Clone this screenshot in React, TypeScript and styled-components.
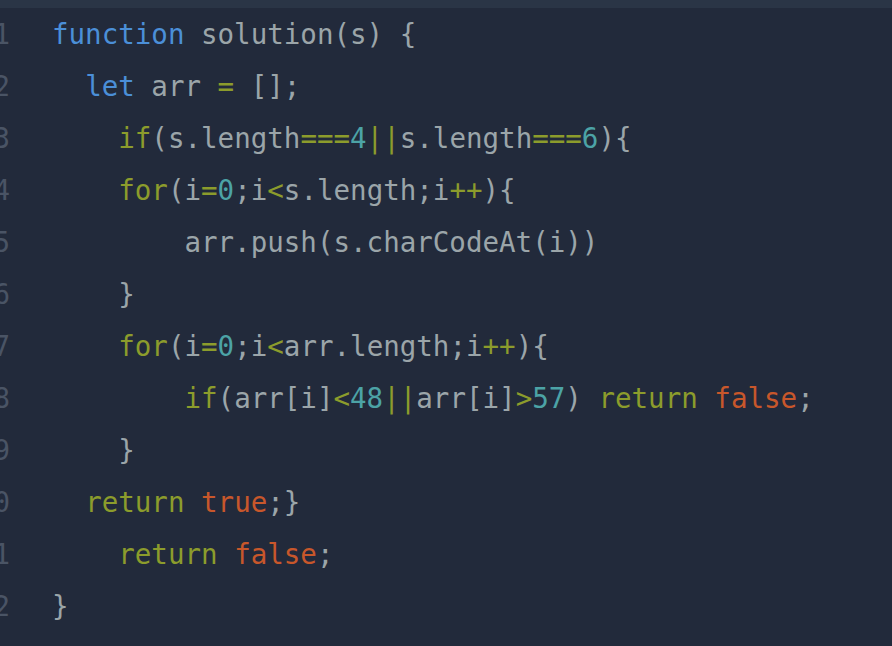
import React from "react";
import styled, { createGlobalStyle } from "styled-components";

const Global = createGlobalStyle`
  html, body { margin: 0; padding: 0; background: #222a3b; overflow: hidden; }
`;

const Frame = styled.div`
  width: 892px;
  height: 646px;
  background: #222a3b;
  display: flex;
  flex-direction: column;
  overflow: hidden;
`;

const TopBar = styled.div`
  height: 8px;
  flex: none;
  background: #2a3546;
`;

const Editor = styled.div`
  display: flex;
  margin-left: -32px;
  font-family: "DejaVu Sans Mono", Menlo, monospace;
  font-size: 27.5px;
  line-height: 52px;
`;

const Gutter = styled.div`
  width: 42px;
  flex: none;
  text-align: right;
  color: #4a5465;
`;

const Code = styled.div`
  padding-left: 42px;
  white-space: pre;
  color: #9ba5a9;
`;

const Line = styled.div`
  height: 52px;
`;

type Kind = "kw" | "ctl" | "num" | "bool" | "txt";
const colors: Record<Kind, string> = {
  kw: "#4b8fd8",
  ctl: "#8c9c2c",
  num: "#4ca3a6",
  bool: "#c8572b",
  txt: "#9ba5a9",
};

const Tok = styled.span<{ $k: Kind }>`
  color: ${(p) => colors[p.$k]};
`;

type T = [Kind, string];
const lines: T[][] = [
  [["kw", "function"], ["txt", " solution(s) {"]],
  [["txt", "  "], ["kw", "let"], ["txt", " arr "], ["ctl", "="], ["txt", " [];"]],
  [["txt", "    "], ["ctl", "if"], ["txt", "(s.length"], ["ctl", "==="], ["num", "4"], ["ctl", "||"], ["txt", "s.length"], ["ctl", "==="], ["num", "6"], ["txt", "){"]],
  [["txt", "    "], ["ctl", "for"], ["txt", "(i"], ["ctl", "="], ["num", "0"], ["txt", ";i"], ["ctl", "<"], ["txt", "s.length;i"], ["ctl", "++"], ["txt", "){"]],
  [["txt", "        arr.push(s.charCodeAt(i))"]],
  [["txt", "    }"]],
  [["txt", "    "], ["ctl", "for"], ["txt", "(i"], ["ctl", "="], ["num", "0"], ["txt", ";i"], ["ctl", "<"], ["txt", "arr.length;i"], ["ctl", "++"], ["txt", "){"]],
  [["txt", "        "], ["ctl", "if"], ["txt", "(arr[i]"], ["ctl", "<"], ["num", "48"], ["ctl", "||"], ["txt", "arr[i]"], ["ctl", ">"], ["num", "57"], ["txt", ") "], ["ctl", "return"], ["txt", " "], ["bool", "false"], ["txt", ";"]],
  [["txt", "    }"]],
  [["txt", "  "], ["ctl", "return"], ["txt", " "], ["bool", "true"], ["txt", ";}"]],
  [["txt", "    "], ["ctl", "return"], ["txt", " "], ["bool", "false"], ["txt", ";"]],
  [["txt", "}"]],
];

export default function App() {
  return (
    <Frame>
      <Global />
      <TopBar />
      <Editor>
        <Gutter>
          {lines.map((_, i) => (
            <Line key={i}>{i + 1}</Line>
          ))}
        </Gutter>
        <Code>
          {lines.map((l, i) => (
            <Line key={i}>
              {l.map(([k, s], j) => (
                <Tok key={j} $k={k}>
                  {s}
                </Tok>
              ))}
            </Line>
          ))}
        </Code>
      </Editor>
    </Frame>
  );
}
